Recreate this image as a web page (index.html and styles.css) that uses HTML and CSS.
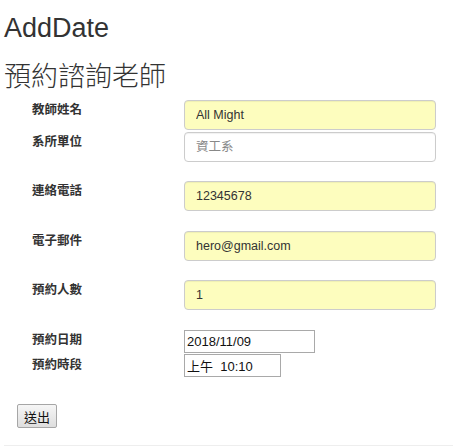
FILE: index.html
```html
<!DOCTYPE html>
<html lang="zh-Hant">
<head>
<meta charset="utf-8">
<title>AddDate</title>
<link rel="stylesheet" href="styles.css">
</head>
<body>
<div class="page">
  <h1 class="title">AddDate</h1>
  <h2 class="subtitle">預約諮詢老師</h2>
  <form class="form">
    <div class="row row-first">
      <label class="label">教師姓名</label>
      <input class="field filled" type="text" value="All Might">
    </div>
    <div class="row row-tight">
      <label class="label">系所單位</label>
      <input class="field" type="text" placeholder="資工系">
    </div>
    <div class="row row-gap">
      <label class="label">連絡電話</label>
      <input class="field filled" type="text" value="12345678">
    </div>
    <div class="row row-gap2">
      <label class="label">電子郵件</label>
      <input class="field filled" type="text" value="hero@gmail.com">
    </div>
    <div class="row row-gap">
      <label class="label">預約人數</label>
      <input class="field filled" type="text" value="1">
    </div>
    <div class="row row-gap2">
      <label class="label">預約日期</label>
      <input class="plain date" type="text" value="2018/11/09">
    </div>
    <div class="row row-tight1">
      <label class="label label-time">預約時段</label>
      <input class="plain time" type="text" value="上午  10:10">
    </div>
    <div class="actions">
      <button class="submit" type="button">送出</button>
    </div>
  </form>
  <hr class="rule">
</div>
</body>
</html>
```

FILE: styles.css
```css
html, body {
  margin: 0;
  padding: 0;
  background: #fff;
}

body {
  font-family: "Liberation Sans", Arial, "Noto Sans CJK TC", sans-serif;
  color: #333;
}

.page {
  padding-left: 4px;
}

.title {
  margin: 13px 0 0 0;
  font-size: 27px;
  line-height: 30px;
  font-weight: 400;
  color: #333;
}

.subtitle {
  margin: 19px 0 0 0;
  font-size: 27px;
  line-height: 30px;
  font-weight: 300;
  color: #333;
}

.form {
  margin: 0;
  padding-left: 28px;
}

.row {
  display: flex;
  align-items: flex-start;
}

.row-first { margin-top: 8px; }
.row-tight { margin-top: 2px; }
.row-gap { margin-top: 19px; }
.row-gap2 { margin-top: 20px; }
.row-tight1 { margin-top: 1px; }

.label {
  width: 152px;
  flex: none;
  font-size: 12.5px;
  line-height: 16px;
  font-weight: 700;
  padding-top: 2px;
  color: #333;
}

.label-time {
  padding-top: 3px;
}

.field {
  box-sizing: border-box;
  width: 252px;
  height: 30px;
  margin: 0;
  padding: 0 11px;
  border: 1px solid #ccc;
  border-radius: 4px;
  background: #fff;
  font-family: "Liberation Sans", Arial, "Noto Sans CJK TC", sans-serif;
  font-size: 12.5px;
  color: #333;
  box-shadow: inset 0 1px 1px rgba(0, 0, 0, 0.06);
}

.field::placeholder {
  color: #888;
}

.filled {
  background: #fdfdbe;
}

.plain {
  box-sizing: border-box;
  height: 23px;
  margin: 0;
  padding: 0 2px;
  border: 1px solid #a9a9a9;
  border-radius: 0;
  background: #fff;
  font-family: "Liberation Sans", Arial, "Noto Sans CJK TC", sans-serif;
  font-size: 13px;
  color: #111;
}

.date { width: 131px; }
.time { width: 97px; }

.actions {
  margin-top: 27px;
  margin-left: -15px;
}

.submit {
  box-sizing: border-box;
  width: 40px;
  height: 24px;
  margin: 0;
  padding: 0;
  border: 1px solid #a6a6a6;
  border-radius: 2px;
  background: linear-gradient(#f6f6f6, #dedede);
  font-family: "Liberation Sans", Arial, "Noto Sans CJK TC", sans-serif;
  font-size: 13px;
  color: #111;
}

.rule {
  margin: 17px 0 0 0;
  border: 0;
  border-top: 1px solid #eee;
  height: 0;
}
```
